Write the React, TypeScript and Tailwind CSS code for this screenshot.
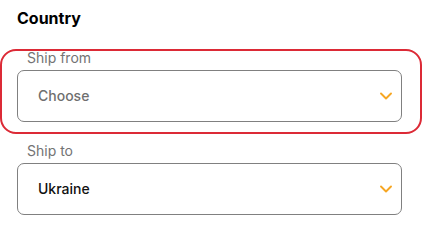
function Chevron() {
  return (
    <svg width="12" height="8" viewBox="0 0 12 8" fill="none" className="shrink-0">
      <path d="M1 1.5 6 6.5 11 1.5" stroke="#f6a623" strokeWidth="1.9" strokeLinecap="round" strokeLinejoin="round" />
    </svg>
  );
}

function Select({ label, value, placeholder }: { label: string; value?: string; placeholder?: boolean }) {
  return (
    <div className="flex flex-col">
      <span className="mb-[5px] pl-[10px] text-[14px] leading-[14px] text-[#737373]">{label}</span>
      <button className="flex h-[52px] items-center justify-between rounded-[7px] border border-[#808080] bg-white pl-5 pr-[9px] text-left">
        <span
          className={
            placeholder
              ? "text-[14px] font-medium leading-5 text-[#6f6f6f]"
              : "text-[14px] font-medium leading-5 text-[#111111]"
          }
        >
          {value}
        </span>
        <Chevron />
      </button>
    </div>
  );
}

export default function App() {
  return (
    <div className="min-h-screen bg-white pt-[6px] font-['Inter','Noto_Sans',sans-serif]">
      <h2 className="pl-[17px] text-[16px] font-bold leading-6 text-black">Country</h2>
      <div className="mt-[19px] mr-[1px] rounded-[16px] border-2 border-[#dc2a36] pb-[10px] pl-[15px] pr-[18px]">
        <Select label="Ship from" value="Choose" placeholder />
      </div>
      <div className="mt-[10px] pl-[17px] pr-[21px]">
        <Select label="Ship to" value="Ukraine" />
      </div>
    </div>
  );
}
